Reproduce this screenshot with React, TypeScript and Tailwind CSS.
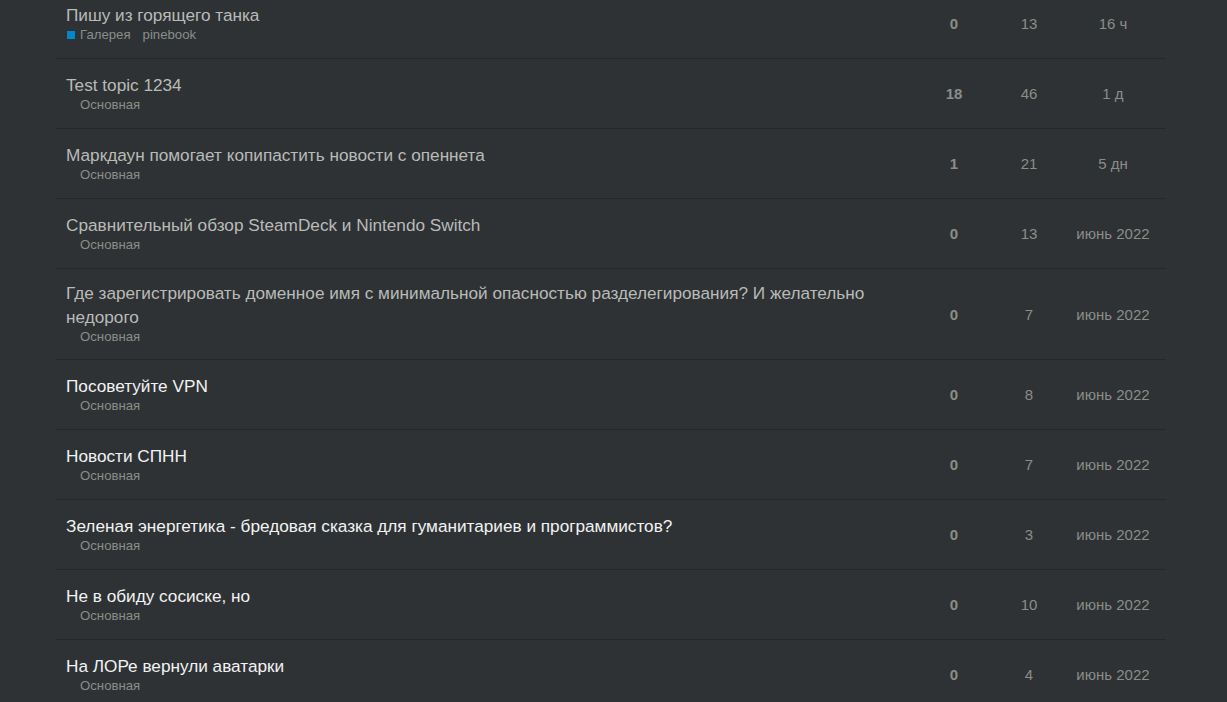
const topics = [
  { title: "Пишу из горящего танка", cat: "Галерея", color: "bg-[#0088cc]", tag: "pinebook", replies: "0", views: "13", activity: "16 ч", visited: true },
  { title: "Test topic 1234", cat: "Основная", replies: "18", views: "46", activity: "1 д", visited: true },
  { title: "Маркдаун помогает копипастить новости с опеннета", cat: "Основная", replies: "1", views: "21", activity: "5 дн", visited: true },
  { title: "Сравнительный обзор SteamDeck и Nintendo Switch", cat: "Основная", replies: "0", views: "13", activity: "июнь 2022", visited: true },
  { title: "Где зарегистрировать доменное имя с минимальной опасностью разделегирования? И желательно недорого", cat: "Основная", replies: "0", views: "7", activity: "июнь 2022", visited: true },
  { title: "Посоветуйте VPN", cat: "Основная", replies: "0", views: "8", activity: "июнь 2022", visited: false },
  { title: "Новости СПНН", cat: "Основная", replies: "0", views: "7", activity: "июнь 2022", visited: false },
  { title: "Зеленая энергетика - бредовая сказка для гуманитариев и программистов?", cat: "Основная", replies: "0", views: "3", activity: "июнь 2022", visited: false },
  { title: "Не в обиду сосиске, но", cat: "Основная", replies: "0", views: "10", activity: "июнь 2022", visited: false },
  { title: "На ЛОРе вернули аватарки", cat: "Основная", replies: "0", views: "4", activity: "июнь 2022", visited: false },
];

function TopicRow({ t }: { t: (typeof topics)[number] }) {
  return (
    <div className="flex items-center border-b border-[#24282a] min-h-[70px] pt-[12px] pb-[14px]">
      <div className="flex-1 pl-[10px] pr-2">
        <div
          className={
            "text-[17.2px] leading-[24px] " +
            (t.visited ? "text-[#b9bbb7]" : "text-[#f2f2f2]")
          }
        >
          {t.title}
        </div>
        <div className="flex items-center text-[13.2px] leading-[16px] text-[#8a8e87]">
          <span className={"w-2 h-2 ml-[1px] mr-[5px] " + (t.color ?? "bg-transparent")} />
          <span>{t.cat}</span>
          {t.tag && <span className="ml-3">{t.tag}</span>}
        </div>
      </div>
      <div className="w-[78px] pt-[4px] text-center text-[15px] font-bold text-[#8a8e87]">{t.replies}</div>
      <div className="w-[72px] pt-[4px] text-center text-[15px] text-[#8a8e87]">{t.views}</div>
      <div className="w-[96px] pt-[4px] text-center text-[15px] text-[#8a8e87]">{t.activity}</div>
      <div className="w-[5px]" />
    </div>
  );
}

export default function App() {
  return (
    <div
      className="w-full h-[702px] overflow-hidden bg-[#2e3235]"
      style={{ fontFamily: '"Liberation Sans", Arial, sans-serif' }}
    >
      <div className="ml-[56px] w-[1110px] -mt-[11px]">
        {topics.map((t) => (
          <TopicRow key={t.title} t={t} />
        ))}
      </div>
    </div>
  );
}
